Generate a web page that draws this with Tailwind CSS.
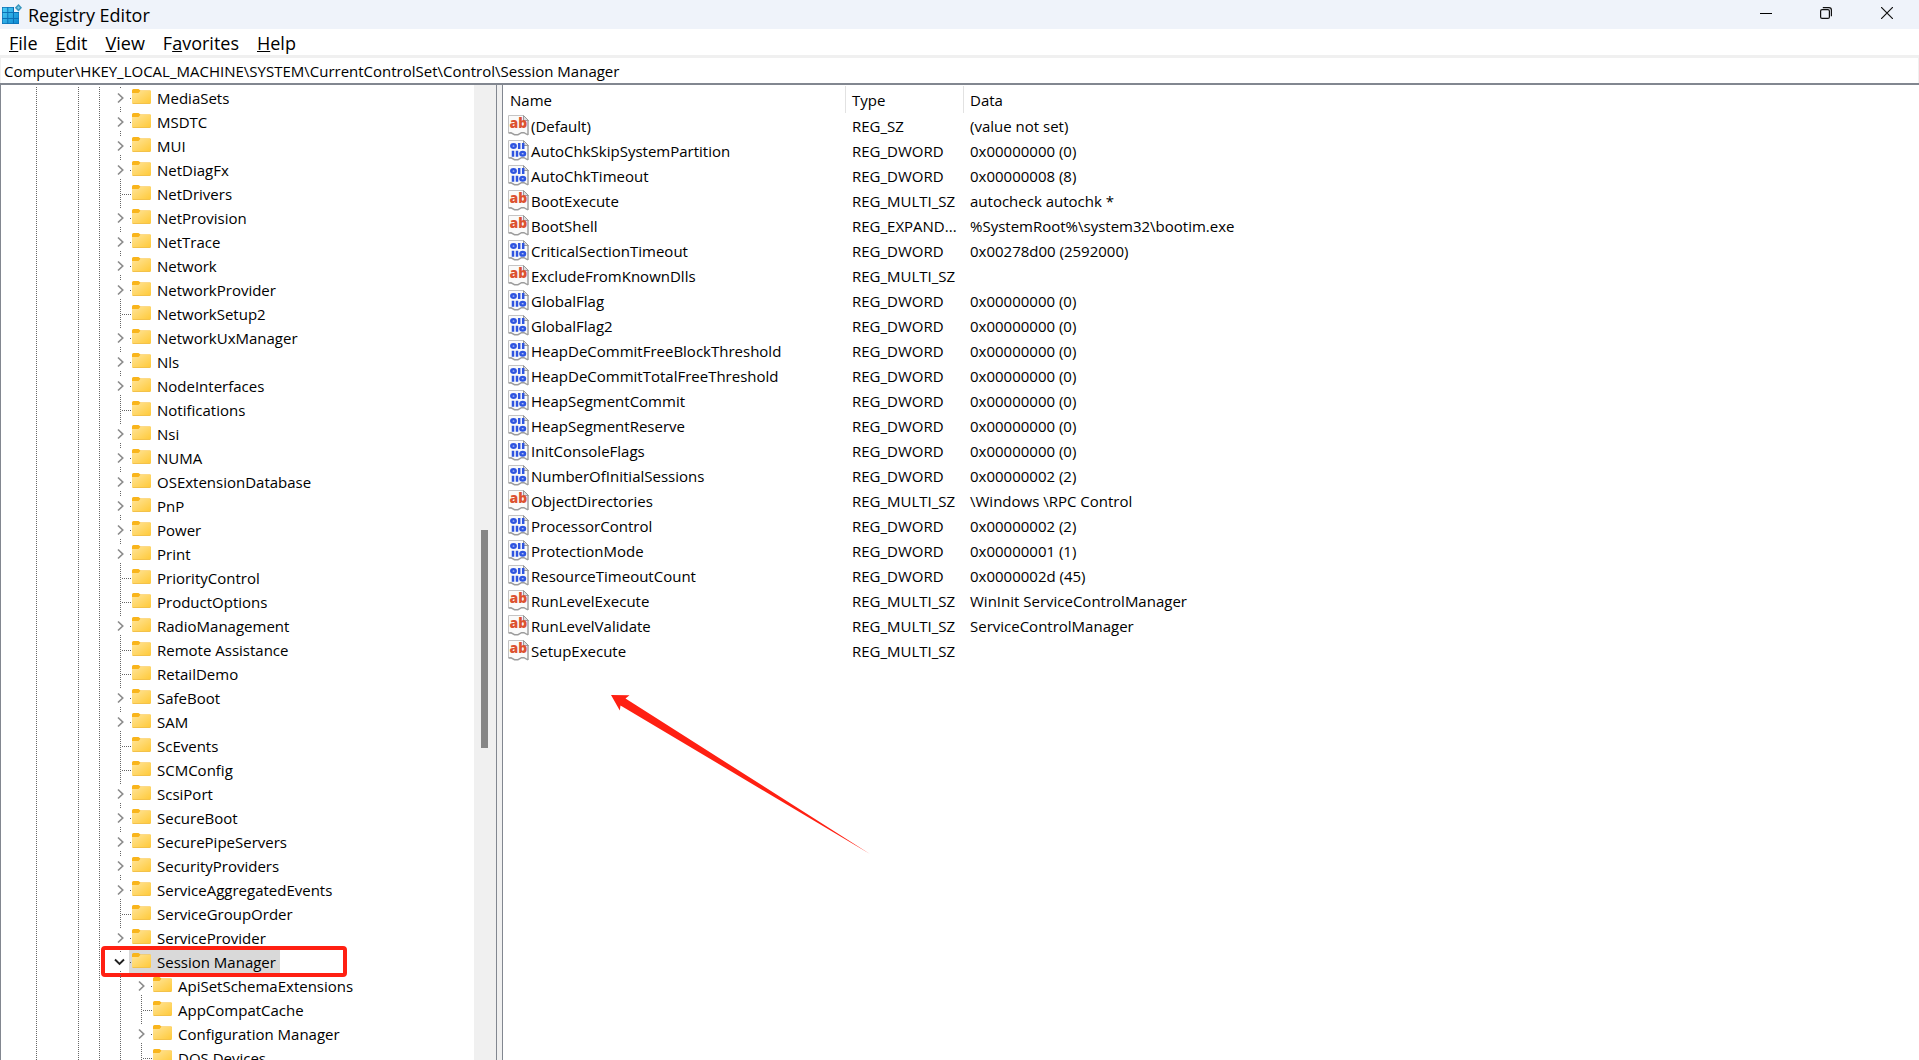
<!DOCTYPE html>
<html lang="en">
<head>
<meta charset="utf-8">
<title>Registry Editor</title>
<script src="https://cdn.jsdelivr.net/npm/@tailwindcss/browser@4"></script>
</head>
<body class="h-screen overflow-hidden flex flex-col bg-white text-black text-[15px] font-['Open_Sans',sans-serif]">

<svg class="absolute w-0 h-0" aria-hidden="true">
  <defs>
    <linearGradient id="folderFill" x1="0" y1="0" x2="1" y2="1"><stop offset="0" stop-color="#ffe59a"/><stop offset="1" stop-color="#ffc938"/></linearGradient>
    <linearGradient id="tile" gradientUnits="userSpaceOnUse" x1="0" y1="3" x2="17" y2="20"><stop offset="0" stop-color="#4fd0f7"/><stop offset="1" stop-color="#0a86d0"/></linearGradient>
  </defs>
  <symbol id="folder" viewBox="0 0 19 15">
    <path d="M0 1.5Q0 0 1.500 0H6.500L8.500 1.500H18Q19 1.500 19 2.500V6H0Z" fill="#f9b51c"/>
    <path d="M0 4H6.500L8.500 1.700H18Q19 1.700 19 2.700V13.500Q19 14.500 18 14.500H1Q0 14.500 0 13.500Z" fill="url(#folderFill)"/>
    <path d="M.5 14.500H18.500" stroke="#f3c24a"/>
  </symbol>
  <symbol id="closed" viewBox="0 0 19 24">
    <path d="M10 1h1v1h-1zM10 21h1v1h-1zM10 23h1v1h-1z" fill="#666"/>
    <path d="M8 7.500L12.700 12L8 16.500" fill="none" stroke="#8c8c8c" stroke-width="1.700"/>
  </symbol>
  <symbol id="open" viewBox="0 0 19 24">
    <path d="M10 1h1v1h-1zM10 21h1v1h-1zM10 23h1v1h-1z" fill="#666"/>
    <path d="M5 9.500L9.500 14L14 9.500" fill="none" stroke="#222" stroke-width="1.900"/>
  </symbol>
  <symbol id="leaf" viewBox="0 0 19 24">
    <path d="M10.500 1V24M12 12.500H19" stroke="#666" stroke-dasharray="1 1"/>
  </symbol>
  <symbol id="page" viewBox="0 0 21 21">
    <path d="M.5 .5H15.500L20.500 5.500V20L17 18.500L14 17.500L11 19.500L7 20L4 18.500L.5 18Z" fill="#fafafa"/>
    <path d="M.5 18V.5H15.500" fill="none" stroke="#c4c4c4"/>
    <path d="M15.500 .5V5.500H20.500Z" fill="#ddd" stroke="#9a9a9a"/>
    <path d="M20 5V20M.5 18L3 17.800L6.500 19.700L10 19.700L13.500 17.700L16 17.700L20 20" fill="none" stroke="#9c9c9c" stroke-width="1.400"/>
  </symbol>
  <symbol id="bin" viewBox="0 0 21 21">
    <use href="#page"/>
    <g fill="none" stroke="#2f55e0" stroke-width="2.500">
      <ellipse cx="5.500" cy="6" rx="2.200" ry="1.800"/><path d="M11.200 3V9M15.200 3V9M5 10.800V16.800M9 10.800V16.800"/><ellipse cx="14.700" cy="13.800" rx="2.300" ry="1.800"/>
    </g>
  </symbol>
</svg>

<header class="h-[29px] shrink-0 flex items-center bg-[#eff3fa]">
  <svg class="w-5 h-5 ml-[2px] mb-px" viewBox="0 0 20 20" aria-hidden="true">
    <path d="M0 3H12V8H17V20H0Z" fill="#0b70b5"/>
    <g fill="url(#tile)"><path d="M.7 3.700H5.300V8H.7ZM6.300 3.700H11V8H6.300ZM.7 9H5.300V14H.7ZM6.300 9H11V14H6.300ZM12 9H16.500V14H12ZM.7 15H5.300V19.300H.7ZM6.300 15H11V19.300H6.300ZM12 15H16.500V19.300H12Z"/></g>
    <path d="M16.500 0L20 3.700L16.500 7.400L12.800 3.700Z" fill="#3795bd"/><path d="M16.500 2L18 3.700L16.500 5.300L15 3.700Z" fill="#7cc9e4"/>
  </svg>
  <h1 class="ml-1.5 mt-px text-[18px] leading-7 flex-1">Registry Editor</h1>
  <div class="flex h-full pr-px">
    <button aria-label="Minimize" class="w-[60px] flex items-center justify-center"><svg class="w-3 h-3 mb-1" viewBox="0 0 12 12"><path d="M0 6.500H12" stroke="#000"/></svg></button>
    <button aria-label="Restore" class="w-[60px] flex items-center justify-center"><svg class="w-3 h-3 mb-[3px]" viewBox="0 0 12 12" fill="none" stroke="#111" stroke-width="1.200"><rect x=".6" y="2.600" width="8.800" height="8.800" rx="1.500"/><path d="M2.800 .6H9Q11.400 .6 11.400 3V9.300"/></svg></button>
    <button aria-label="Close" class="w-[62px] pr-px flex items-center justify-center"><svg class="w-3 h-3 mb-[3px]" viewBox="0 0 12 12"><path d="M0 0L12 12M12 0L0 12" stroke="#111" stroke-width="1.200"/></svg></button>
  </div>
</header>

<nav class="h-[26px] shrink-0 flex items-center gap-[18px] pt-[2px] pl-[9px] text-[18px] leading-6" aria-label="Menu">
  <button><u>F</u>ile</button>
  <button><u>E</u>dit</button>
  <button><u>V</u>iew</button>
  <button>F<u>a</u>vorites</button>
  <button><u>H</u>elp</button>
</nav>

<div class="h-[30px] shrink-0 flex pt-[3px] px-px bg-[#f0f0f0] border-b-2 border-[#828790]">
  <input aria-label="Address" class="flex-1 bg-white px-[3px] pt-[2px] outline-none" value="Computer\HKEY_LOCAL_MACHINE\SYSTEM\CurrentControlSet\Control\Session Manager">
</div>

<main class="flex-1 min-h-0 flex bg-[#f0f0f0]">
  <section class="w-[497px] shrink-0 flex border-x border-[#828790] bg-white" aria-label="Keys">
    <ul id="tree" class="flex-1 min-w-0 overflow-hidden pt-px leading-6 whitespace-nowrap"></ul>
    <div class="w-[22px] pt-px pr-px flex flex-col items-center bg-[#f0f0f0]" aria-hidden="true">
      <div class="flex-[444]"></div>
      <div class="flex-[218] w-[7px] bg-[#868686]"></div>
      <div class="flex-[312]"></div>
    </div>
  </section>
  <section class="relative flex-1 min-w-0 ml-[5px] border-l border-[#828790] bg-white pt-px" aria-label="Values">
    <table class="w-full table-fixed border-collapse text-left whitespace-nowrap">
      <colgroup><col class="w-[343px]"><col class="w-[118px]"><col></colgroup>
      <thead>
        <tr class="h-7 align-top">
          <th class="p-0 font-normal"><div class="h-[27px] leading-7 pl-[7px] border-r border-[#e2e2e2]">Name</div></th>
          <th class="p-0 font-normal"><div class="h-[27px] leading-7 pl-1.5 border-r border-[#e2e2e2]">Type</div></th>
          <th class="p-0 font-normal"><div class="h-[27px] leading-7 pl-1.5">Data</div></th>
        </tr>
      </thead>
      <tbody id="values"></tbody>
    </table>
    <svg class="absolute left-[108px] top-[609px] w-[262px] h-[162px] pointer-events-none" viewBox="0 0 262 162" aria-hidden="true">
      <path d="M0 1L18.500 1.300L14.500 4.500L259 160L9.500 11.500L8.800 16.500Z" fill="#ff2012"/>
    </svg>
  </section>
</main>

<script>
// A leading "-" marks a key without subkeys, ">" a nested key.
const keys = `MediaSets|MSDTC|MUI|NetDiagFx|-NetDrivers|NetProvision|NetTrace|Network|NetworkProvider|-NetworkSetup2|NetworkUxManager|Nls|NodeInterfaces|-Notifications|Nsi|NUMA|OSExtensionDatabase|PnP|Power|Print|-PriorityControl|-ProductOptions|RadioManagement|-Remote Assistance|-RetailDemo|SafeBoot|SAM|-ScEvents|-SCMConfig|ScsiPort|SecureBoot|SecurePipeServers|SecurityProviders|ServiceAggregatedEvents|-ServiceGroupOrder|ServiceProvider|Session Manager|>ApiSetSchemaExtensions|>-AppCompatCache|>Configuration Manager|>-DOS Devices`.split('|');
const line = 'shrink-0 h-6 bg-[repeating-linear-gradient(to_bottom,transparent_0_1px,#666_1px_2px)] bg-[length:1px_24px] bg-no-repeat';
document.getElementById('tree').innerHTML = keys.map(key => {
  const nested = key.startsWith('>');
  if (nested) key = key.slice(1);
  const leaf = key.startsWith('-');
  if (leaf) key = key.slice(1);
  const current = key === 'Session Manager';
  // Nested rows keep the parent guide and start their own branch one step to the right.
  const guides = `<span class="w-[42px] ${line}"></span><span class="w-[21px] ${line}"></span>` +
    (nested ? `<span class="w-[21px] ${line}"></span>` : '') +
    `<span class="w-[11px] ${line}"></span>`;
  const glyph = `<svg class="w-[19px] h-6 block" aria-hidden="true"><use href="#${leaf ? 'leaf' : current ? 'open' : 'closed'}"/></svg>`;
  const toggle = leaf ? glyph : `<button aria-label="Toggle ${key}">${glyph}</button>`;
  return `<li class="relative h-6 flex pl-[35px]">${guides}${toggle}<span class="flex items-center ${current ? 'bg-[#d9d9d9] pr-1' : ''}"><svg class="w-[3px] h-6" viewBox="0 0 3 24" aria-hidden="true"><path d="M1 12h1v1h-1z" fill="#555"/></svg><svg class="w-[19px] h-[15px] mb-[3px]" aria-hidden="true"><use href="#folder"/></svg><span class="ml-[6px]">${key}</span></span>${current ? '<span class="absolute left-[100px] -top-1 w-[246px] h-[31px] border-4 border-[#ff2012] rounded"></span>' : ''}</li>`;
}).join('');

const values = [
  ['(Default)', 'REG_SZ', '(value not set)'],
  ['AutoChkSkipSystemPartition', 'REG_DWORD', '0x00000000 (0)'],
  ['AutoChkTimeout', 'REG_DWORD', '0x00000008 (8)'],
  ['BootExecute', 'REG_MULTI_SZ', 'autocheck autochk *'],
  ['BootShell', 'REG_EXPAND...', '%SystemRoot%\\system32\\bootim.exe'],
  ['CriticalSectionTimeout', 'REG_DWORD', '0x00278d00 (2592000)'],
  ['ExcludeFromKnownDlls', 'REG_MULTI_SZ', ''],
  ['GlobalFlag', 'REG_DWORD', '0x00000000 (0)'],
  ['GlobalFlag2', 'REG_DWORD', '0x00000000 (0)'],
  ['HeapDeCommitFreeBlockThreshold', 'REG_DWORD', '0x00000000 (0)'],
  ['HeapDeCommitTotalFreeThreshold', 'REG_DWORD', '0x00000000 (0)'],
  ['HeapSegmentCommit', 'REG_DWORD', '0x00000000 (0)'],
  ['HeapSegmentReserve', 'REG_DWORD', '0x00000000 (0)'],
  ['InitConsoleFlags', 'REG_DWORD', '0x00000000 (0)'],
  ['NumberOfInitialSessions', 'REG_DWORD', '0x00000002 (2)'],
  ['ObjectDirectories', 'REG_MULTI_SZ', '\\Windows \\RPC Control'],
  ['ProcessorControl', 'REG_DWORD', '0x00000002 (2)'],
  ['ProtectionMode', 'REG_DWORD', '0x00000001 (1)'],
  ['ResourceTimeoutCount', 'REG_DWORD', '0x0000002d (45)'],
  ['RunLevelExecute', 'REG_MULTI_SZ', 'WinInit ServiceControlManager'],
  ['RunLevelValidate', 'REG_MULTI_SZ', 'ServiceControlManager'],
  ['SetupExecute', 'REG_MULTI_SZ', '']
];
const binIcon = '<use href="#bin"/>';
const textIcon = '<use href="#page"/><text x="1.500" y="13" font-family="Open Sans" font-weight="800" font-size="14" fill="#dc5230">ab</text>';
document.getElementById('values').innerHTML = values.map(([name, type, data]) =>
  `<tr class="h-[25px] leading-[25px]"><td class="p-0 pl-[5px]"><div class="flex items-center"><svg class="w-[21px] h-[21px] mb-[2px]" viewBox="0 0 21 21" aria-hidden="true">${type === 'REG_DWORD' ? binIcon : textIcon}</svg><span class="ml-[2px]">${name}</span></div></td><td class="p-0 pl-1.5">${type}</td><td class="p-0 pl-1.5">${data}</td></tr>`).join('');
</script>
</body>
</html>
